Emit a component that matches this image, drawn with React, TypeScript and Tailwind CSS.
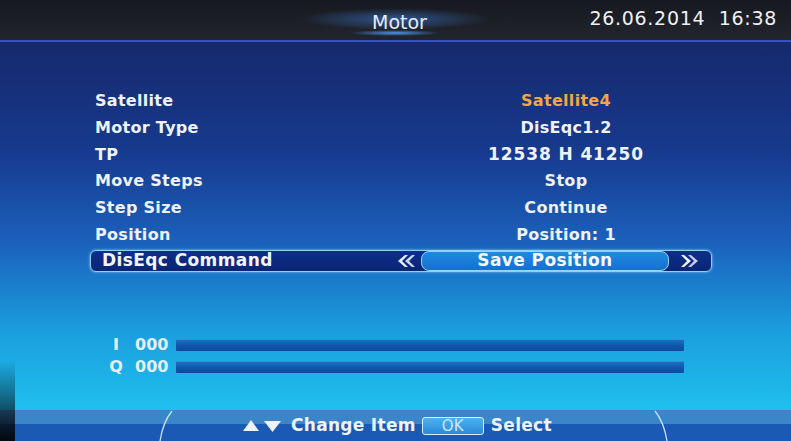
import React from 'react';

const ROWS: { label: string; value: string; accent?: boolean; wide?: boolean }[] = [
  { label: 'Satellite', value: 'Satellite4', accent: true },
  { label: 'Motor Type', value: 'DisEqc1.2' },
  { label: 'TP', value: '12538 H 41250', wide: true },
  { label: 'Move Steps', value: 'Stop' },
  { label: 'Step Size', value: 'Continue' },
  { label: 'Position', value: 'Position: 1' },
];

const FONT = { fontFamily: '"DejaVu Sans", Verdana, sans-serif' };

function ChevronsLeft() {
  return (
    <svg width="18" height="14" viewBox="0 0 18 14">
      <path d="M8 1 L1 7 L8 13 L11 13 L5 7 L11 1 Z" fill="#e8eefc" />
      <path d="M15 1 L8 7 L15 13 L18 13 L12 7 L18 1 Z" fill="#c9d6f5" />
    </svg>
  );
}

function ChevronsRight() {
  return (
    <svg width="18" height="14" viewBox="0 0 18 14">
      <path d="M3 1 L10 7 L3 13 L0 13 L6 7 L0 1 Z" fill="#f1f4ff" />
      <path d="M10 1 L17 7 L10 13 L7 13 L13 7 L7 1 Z" fill="#c9c6f2" />
    </svg>
  );
}

function SignalBar({ ch }: { ch: string }) {
  return (
    <div className="flex items-center h-[22px] text-[16px] font-bold text-[#e6eef8]">
      <span className="w-[20px] text-center">{ch}</span>
      <span className="w-[50px] pl-[9px]">000</span>
      <div className="w-[508px] h-[12px] rounded-[1px] bg-gradient-to-b from-[#1d6fc2] via-[#0f57ab] to-[#0b4c9c] border-t border-[#3b88d4]" />
    </div>
  );
}

export default function App() {
  return (
    <div
      className="relative w-[791px] h-[441px] overflow-hidden flex flex-col text-white"
      style={FONT}
    >
      {/* header */}
      <div className="relative h-[40px] shrink-0 bg-gradient-to-b from-[#17191f] to-[#23252e] flex items-center">
        <div className="absolute left-[300px] top-[8px] w-[190px] h-[22px] rounded-full bg-[radial-gradient(ellipse_at_center,_rgba(60,130,230,0.55),_rgba(20,40,90,0)_70%)]" />
        <div className="absolute left-[350px] top-[30px] w-[90px] h-[6px] rounded-full bg-[radial-gradient(ellipse_at_center,_rgba(80,160,255,0.9),_rgba(20,40,90,0)_70%)]" />
        <span className="relative ml-[372px] mt-[4px] text-[19px] text-[#e8ecf4]">Motor</span>
        <span className="relative ml-auto mr-[14px] mt-[-3px] text-[19px] text-[#eef0f4] tracking-[0.7px]">
          26.06.2014&nbsp;&nbsp;16:38
        </span>
      </div>
      <div className="h-[2px] shrink-0 bg-[#3550c0]" />

      {/* body */}
      <div className="relative flex-1 flex flex-col bg-[linear-gradient(180deg,#16296c_0%,#173a8e_30%,#1b62bd_55%,#1a9ddd_78%,#1fc0ee_100%)]">
        <div className="flex flex-col pl-[90px] pr-[79px] pt-[46px]">
          {ROWS.map((r) => (
            <div key={r.label} className="flex items-center h-[26.7px] text-[16px] font-bold tracking-[0.3px]">
              <span className="pl-[5px] text-[#eef2fa]">{r.label}</span>
              <span
                className={`ml-auto w-[292px] text-center ${r.accent ? 'text-[#f4a640]' : 'text-[#eef2fa]'} ${r.wide ? 'text-[17px] tracking-[0.9px]' : ''}`}
              >
                {r.value}
              </span>
            </div>
          ))}
          {/* selected row */}
          <div className="mt-[2px] h-[22px] flex items-center rounded-[6px] border border-[#8fd0f4] bg-gradient-to-b from-[#0d2f8a] to-[#0a2474] text-[17px] font-bold tracking-[0.4px] shadow-[0_0_3px_rgba(150,220,255,0.8)]">
            <span className="pl-[11px] text-[#f2f4fa]">DisEqc Command</span>
            <span className="ml-auto mr-[6px] flex"><ChevronsLeft /></span>
            <div className="w-[248px] h-[20px] rounded-[8px] border border-[#8fd8ff] bg-gradient-to-b from-[#1f8ae0] to-[#1670cf] flex items-center justify-center text-[#f4f8ff]">
              Save Position
            </div>
            <span className="ml-[12px] mr-[12px] flex"><ChevronsRight /></span>
          </div>
        </div>

        <div className="mt-[62px] ml-[106px] flex flex-col">
          <SignalBar ch="I" />
          <SignalBar ch="Q" />
        </div>
      </div>

      {/* footer */}
      <div className="relative h-[31px] shrink-0 flex flex-col">
        <div className="h-[14px] bg-[#3b86c8]" />
        <div className="flex-1 bg-[#1a5ab4]" />
        <svg className="absolute left-[155px] top-0" width="20" height="31" viewBox="0 0 20 31">
          <path d="M17 1 Q8 12 5 31" stroke="#cfe6ff" strokeWidth="1.2" fill="none" />
        </svg>
        <svg className="absolute left-[652px] top-0" width="20" height="31" viewBox="0 0 20 31">
          <path d="M3 1 Q12 12 15 31" stroke="#cfe6ff" strokeWidth="1.2" fill="none" />
        </svg>
        <div className="absolute inset-0 flex items-center pl-[243px] pt-[1px] text-[17px] font-bold tracking-[0.3px] text-[#eef3fa]">
          <svg width="16" height="12" viewBox="0 0 16 12" className="mr-[5px]">
            <path d="M8 0 L16 11 L0 11 Z" fill="#eef3fa" />
          </svg>
          <svg width="17" height="12" viewBox="0 0 17 12" className="mr-[10px]">
            <path d="M0 1 L17 1 L8.5 12 Z" fill="#eef3fa" />
          </svg>
          <span>Change Item</span>
          <span className="ml-[6px] mr-[7px] w-[62px] h-[18px] rounded-[3px] border border-[#d8eeff] bg-gradient-to-b from-[#4db2ee] to-[#2a8ad8] flex items-center justify-center text-[15px] font-normal text-[#cfe6ff]">
            OK
          </span>
          <span>Select</span>
        </div>
      </div>

      {/* tv bezel edge */}
      <div className="absolute left-0 top-[360px] w-[15px] h-[81px] bg-gradient-to-b from-transparent to-[#05080f]" />
    </div>
  );
}
